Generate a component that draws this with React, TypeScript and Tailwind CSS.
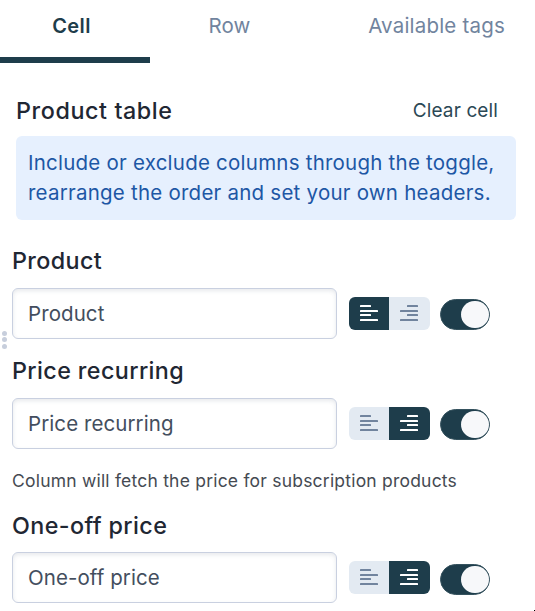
import { useState } from 'react';

type Align = 'left' | 'right';

type Column = {
  id: string;
  label: string;
  align: Align;
  hint?: string;
  spacing: string;
  titleSpacing: string;
  switchSpacing: string;
};

const columns: Column[] = [
  {
    id: 'product',
    label: 'Product',
    align: 'left',
    spacing: 'mt-[26px]',
    titleSpacing: 'mb-3',
    switchSpacing: 'mt-[2px]',
  },
  {
    id: 'recurring',
    label: 'Price recurring',
    align: 'right',
    hint: 'Column will fetch the price for subscription products',
    spacing: 'mt-[17px]',
    titleSpacing: 'mb-3',
    switchSpacing: 'mt-[2px]',
  },
  {
    id: 'one-off',
    label: 'One-off price',
    align: 'right',
    spacing: 'mt-[18px]',
    titleSpacing: 'mb-[11px]',
    switchSpacing: 'mt-1',
  },
];

const AlignIcon = ({ align }: { align: Align }) => (
  <svg width="18" height="16" viewBox="0 0 18 16" fill="currentColor">
    <rect x={align === 'left' ? 0 : 7} y="0" width="11" height="2" rx="0.6" />
    <rect x="0" y="5" width="18" height="2" rx="0.6" />
    <rect x={align === 'left' ? 0 : 7} y="9" width="11" height="2" rx="0.6" />
    <rect x="0" y="14" width="18" height="2" rx="0.6" />
  </svg>
);

const AlignToggle = ({ initial }: { initial: Align }) => {
  const [align, setAlign] = useState<Align>(initial);
  const on = 'bg-[#1e3d4b] text-white';
  const off = 'bg-[#e3eaf2] text-[#71849e]';

  return (
    <div className="ml-3 flex h-[33px] w-[81px] overflow-hidden rounded-md">
      <button
        onClick={() => setAlign('left')}
        className={`flex w-10 items-start justify-center pt-2 ${align === 'left' ? on : off}`}
      >
        <AlignIcon align="left" />
      </button>
      <button
        onClick={() => setAlign('right')}
        className={`flex w-[41px] items-start pt-2 pl-[11px] ${align === 'right' ? on : off}`}
      >
        <AlignIcon align="right" />
      </button>
    </div>
  );
};

const Switch = ({ className }: { className: string }) => {
  const [checked, setChecked] = useState(true);

  return (
    <button
      role="switch"
      aria-checked={checked}
      onClick={() => setChecked(!checked)}
      className={`ml-[10px] flex h-[31px] w-[50px] items-center rounded-full border border-[#35525e] px-[0.5px] ${className} ${
        checked ? 'justify-end bg-[#1e3d4b]' : 'justify-start bg-[#c9d3e0]'
      }`}
    >
      <span className="size-[27.5px] rounded-full bg-[#f7f8fa]" />
    </button>
  );
};

const App = () => {
  return (
    <div className="relative h-[611px] w-[535px] overflow-hidden bg-white font-['Inter',sans-serif] text-[#1f2733]">
      <nav className="flex h-[63px] text-[20.5px] leading-[30px] tracking-[0.2px] text-[#71849e]">
        <button className="flex w-[150px] justify-center border-b-[6px] border-[#1e3d4b] pt-[11px] pr-[7px] text-[20px] font-semibold tracking-[0.35px] text-[#1e3d4b]">
          Cell
        </button>
        <button className="flex w-[159px] justify-center pt-[11px]">Row</button>
        <button className="flex flex-1 justify-end pt-[11px] pr-[30px]">Available tags</button>
      </nav>

      <div className="mt-[33px] flex h-[30px] items-center justify-between pr-[37px] pl-4">
        <h2 className="text-[23.3px] font-medium tracking-[0.6px]">Product table</h2>
        <button className="pt-px text-[19px] tracking-[0.12px] text-[#2b4855]">Clear cell</button>
      </div>

      <div className="mt-[10px] ml-4 h-[84px] w-[500px] rounded-md bg-[#e6f0fe] px-3 pt-3 text-[20.5px] leading-[30px] tracking-[0.23px] whitespace-nowrap text-[#1d57a5]">
        Include or exclude columns through the toggle,
        <br />
        rearrange the order and set your own headers.
      </div>

      {columns.map((column) => (
        <section key={column.id} className={`pl-3 ${column.spacing}`}>
          <h3 className={`h-[30px] text-[23.3px] leading-[30px] font-medium tracking-[0.4px] ${column.titleSpacing}`}>
            {column.label}
          </h3>
          <div className="flex items-center">
            <input
              defaultValue={column.label}
              className="h-[51px] w-[325px] rounded-md border border-[#c9d0e0] px-[15px] text-[20.5px] tracking-[0.08px] text-[#434e5e] shadow-[inset_0_2px_4px_rgba(60,70,100,0.12)] outline-none"
            />
            <AlignToggle initial={column.align} />
            <Switch className={column.switchSpacing} />
          </div>
          {column.hint && (
            <p className="mt-[20px] h-6 text-[17.5px] leading-6 tracking-[0.21px] text-[#454a52]">{column.hint}</p>
          )}
        </section>
      ))}

      {/* Drag handle on the panel edge */}
      <div className="absolute top-[330.5px] left-[2.3px] flex flex-col gap-[1.5px]">
        <span className="size-[5px] rounded-full bg-[#c7cedc]" />
        <span className="size-[5px] rounded-full bg-[#c7cedc]" />
        <span className="size-[5px] rounded-full bg-[#c7cedc]" />
      </div>
      <span className="absolute right-0 bottom-0 size-px bg-black" />
    </div>
  );
};

export default App;
